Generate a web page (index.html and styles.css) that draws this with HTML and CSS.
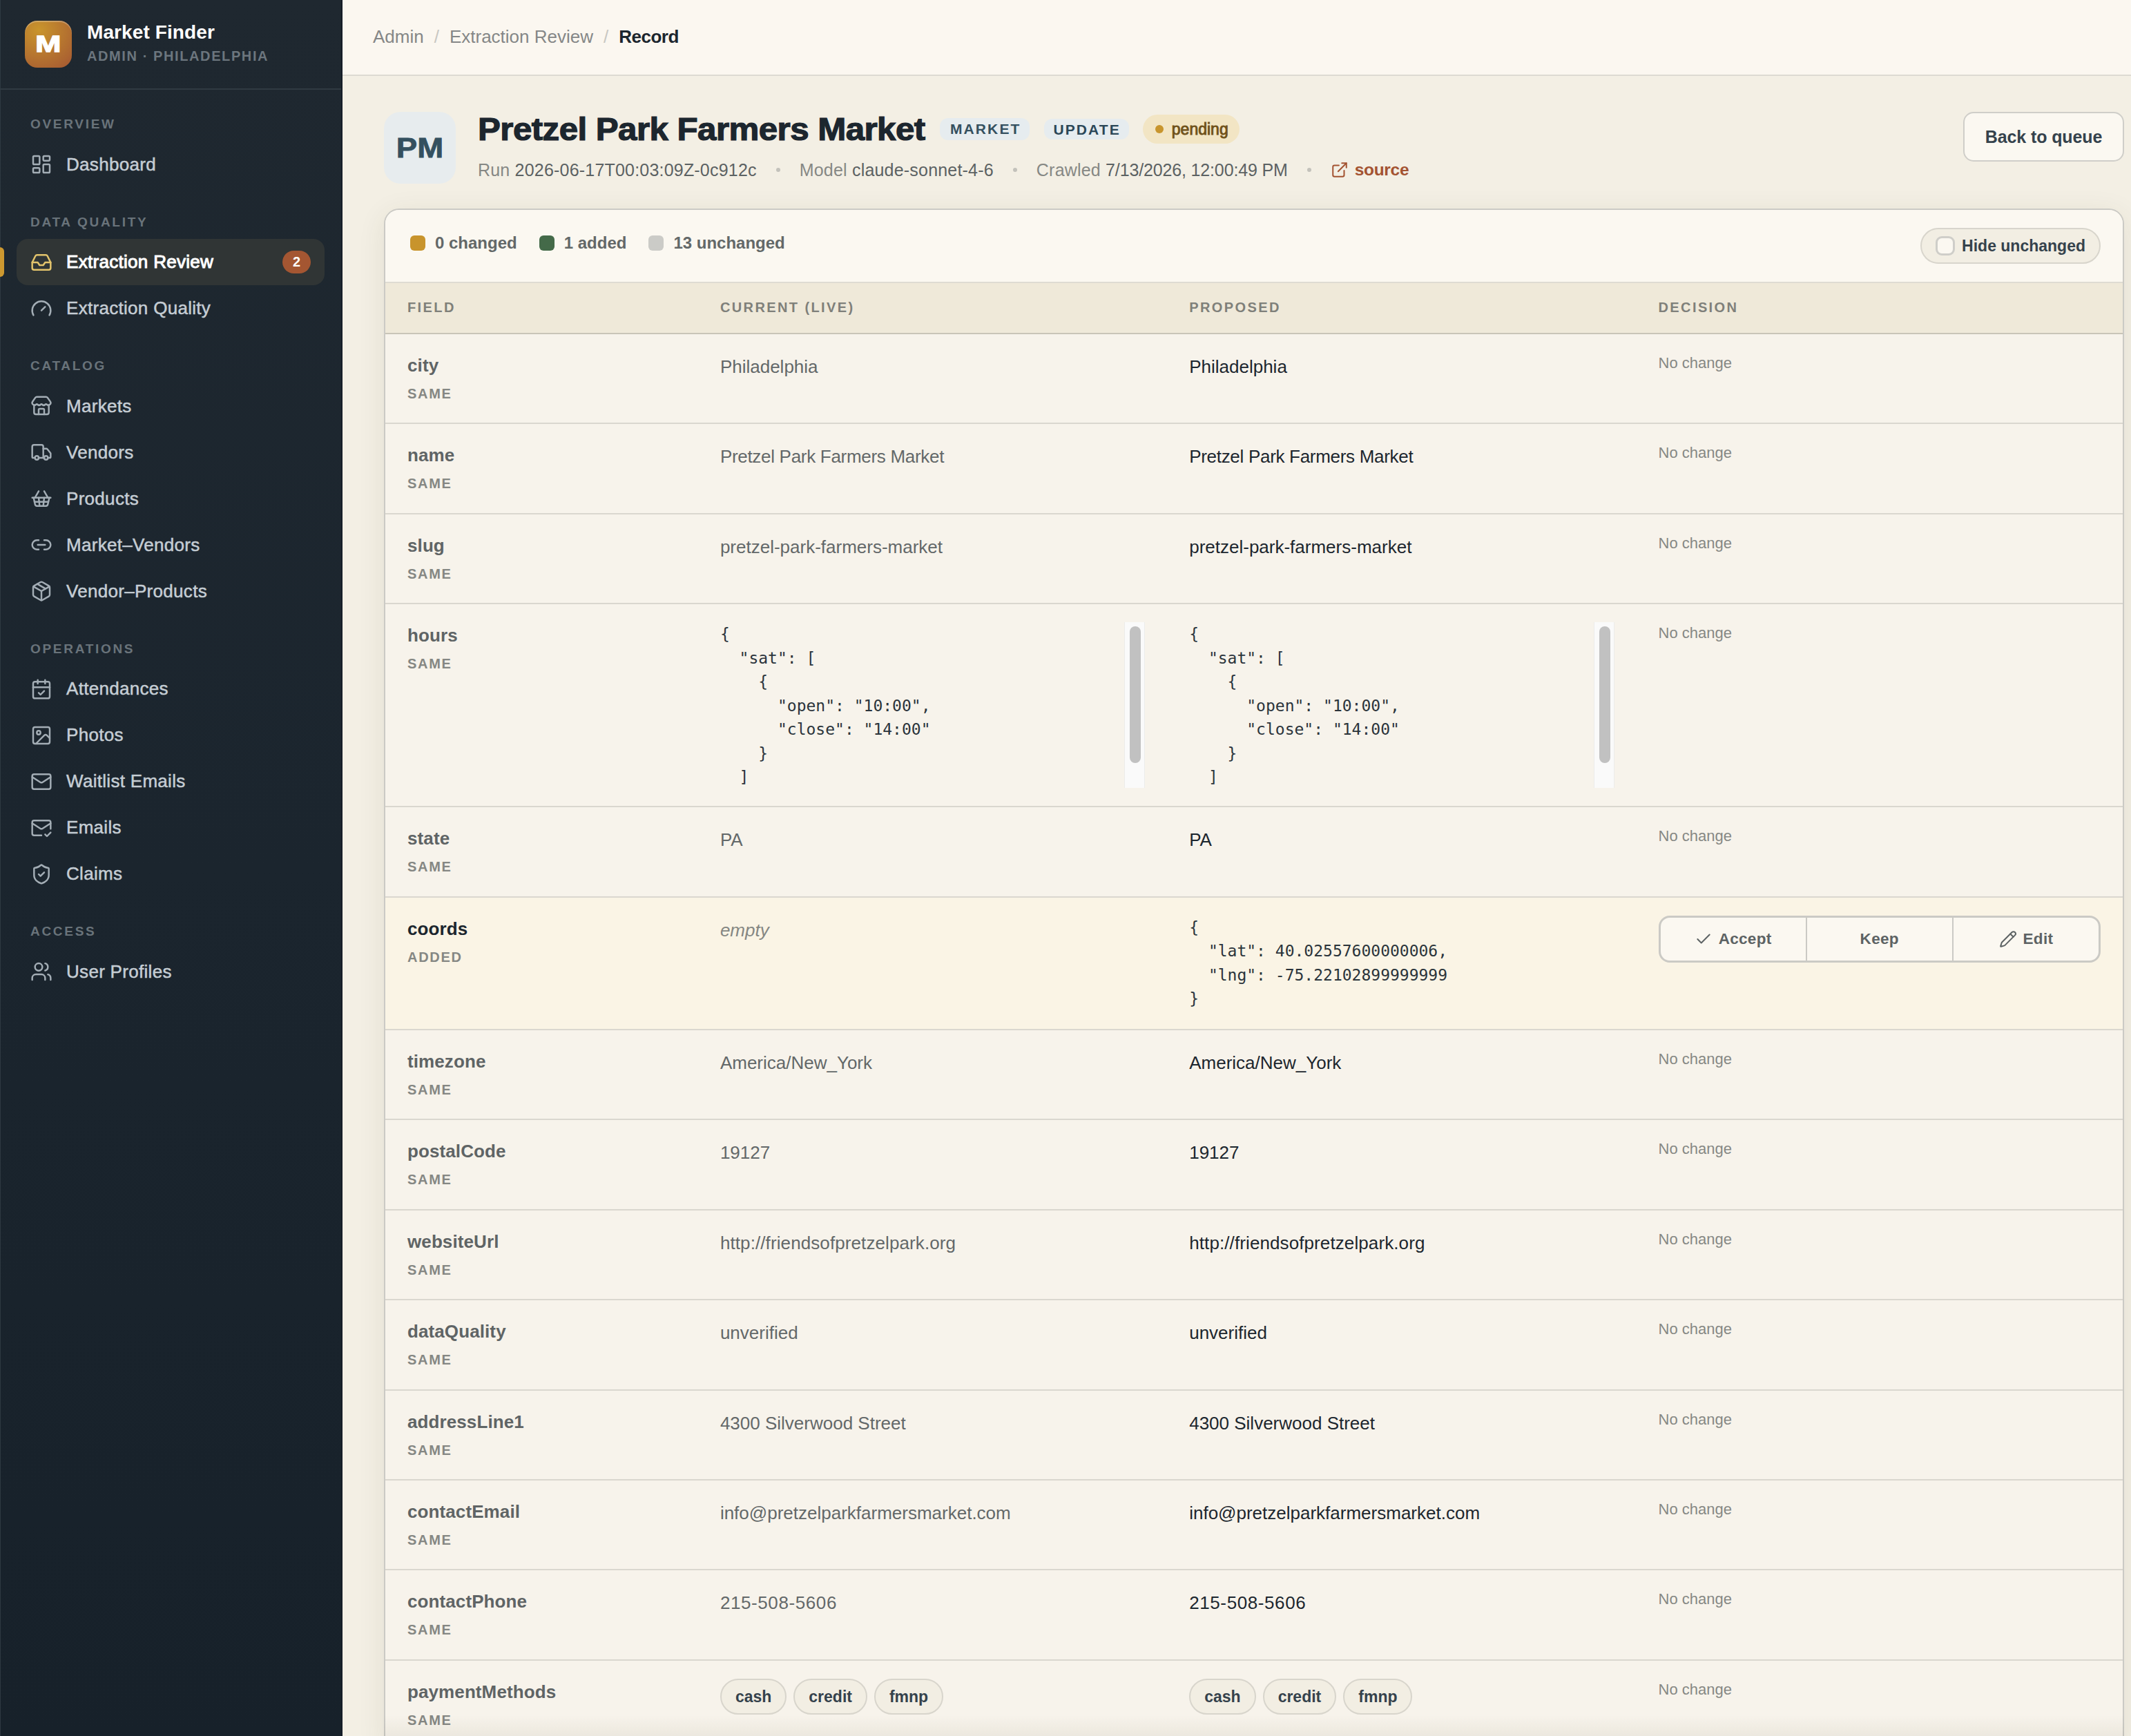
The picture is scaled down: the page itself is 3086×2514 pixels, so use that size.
FILE: index.html
```html
<!DOCTYPE html>
<html lang="en">
<head>
  <meta charset="UTF-8">
  <meta name="viewport" content="width=device-width, initial-scale=1.0">
  <title>Pretzel Park Farmers Market - Extraction Review</title>
  <link rel="stylesheet" href="styles.css">
</head>
<body>

<aside class="sidebar">
  <div class="brand">
    <div class="brand-logo"><span>M</span></div>
    <div class="brand-text">
      <div class="brand-name">Market Finder</div>
      <div class="brand-sub">Admin · Philadelphia</div>
    </div>
  </div>

  <nav class="nav">
    <div class="nav-label">Overview</div>
    <a class="nav-item">
      <svg class="icon" viewBox="0 0 24 24"><rect width="7" height="9" x="3" y="3" rx="1"/><rect width="7" height="5" x="14" y="3" rx="1"/><rect width="7" height="9" x="14" y="12" rx="1"/><rect width="7" height="5" x="3" y="16" rx="1"/></svg>
      <span>Dashboard</span>
    </a>

    <div class="nav-label">Data quality</div>
    <a class="nav-item active">
      <svg class="icon" viewBox="0 0 24 24"><path d="M22 12h-6l-2 3h-4l-2-3H2"/><path d="M5.45 5.11 2 12v6a2 2 0 0 0 2 2h16a2 2 0 0 0 2-2v-6l-3.45-6.89A2 2 0 0 0 16.76 4H7.24a2 2 0 0 0-1.79 1.11z"/></svg>
      <span>Extraction Review</span>
      <span class="nav-count">2</span>
    </a>
    <a class="nav-item">
      <svg class="icon" viewBox="0 0 24 24"><path d="m12 14 4-4"/><path d="M3.34 19a10 10 0 1 1 17.32 0"/></svg>
      <span>Extraction Quality</span>
    </a>

    <div class="nav-label">Catalog</div>
    <a class="nav-item">
      <svg class="icon" viewBox="0 0 24 24"><path d="M15 21v-5a1 1 0 0 0-1-1h-4a1 1 0 0 0-1 1v5"/><path d="M17.774 10.31a1.12 1.12 0 0 0-1.549 0 2.5 2.5 0 0 1-3.451 0 1.12 1.12 0 0 0-1.548 0 2.5 2.5 0 0 1-3.452 0 1.12 1.12 0 0 0-1.549 0 2.5 2.5 0 0 1-3.77-3.248l2.889-4.184A2 2 0 0 1 7 2h10a2 2 0 0 1 1.653.873l2.895 4.192a2.5 2.5 0 0 1-3.774 3.244"/><path d="M4 10.95V19a2 2 0 0 0 2 2h12a2 2 0 0 0 2-2v-8.05"/></svg>
      <span>Markets</span>
    </a>
    <a class="nav-item">
      <svg class="icon" viewBox="0 0 24 24"><path d="M14 18V6a2 2 0 0 0-2-2H4a2 2 0 0 0-2 2v11a1 1 0 0 0 1 1h2"/><path d="M15 18H9"/><path d="M19 18h2a1 1 0 0 0 1-1v-3.65a1 1 0 0 0-.22-.624l-3.48-4.35A1 1 0 0 0 17.52 8H14"/><circle cx="17" cy="18" r="2"/><circle cx="7" cy="18" r="2"/></svg>
      <span>Vendors</span>
    </a>
    <a class="nav-item">
      <svg class="icon" viewBox="0 0 24 24"><path d="m15 11-1 9"/><path d="m19 11-4-7"/><path d="M2 11h20"/><path d="m3.5 11 1.6 7.4a2 2 0 0 0 2 1.6h9.8a2 2 0 0 0 2-1.6l1.7-7.4"/><path d="M4.5 15.5h15"/><path d="m5 11 4-7"/><path d="m9 11 1 9"/></svg>
      <span>Products</span>
    </a>
    <a class="nav-item">
      <svg class="icon" viewBox="0 0 24 24"><path d="M9 17H7A5 5 0 0 1 7 7h2"/><path d="M15 7h2a5 5 0 1 1 0 10h-2"/><path d="M8 12h8"/></svg>
      <span>Market–Vendors</span>
    </a>
    <a class="nav-item">
      <svg class="icon" viewBox="0 0 24 24"><path d="M11 21.73a2 2 0 0 0 2 0l7-4A2 2 0 0 0 21 16V8a2 2 0 0 0-1-1.73l-7-4a2 2 0 0 0-2 0l-7 4A2 2 0 0 0 3 8v8a2 2 0 0 0 1 1.73z"/><path d="M12 22V12"/><path d="M3.29 7 12 12l8.71-5"/><path d="m7.5 4.27 9 5.15"/></svg>
      <span>Vendor–Products</span>
    </a>

    <div class="nav-label">Operations</div>
    <a class="nav-item">
      <svg class="icon" viewBox="0 0 24 24"><path d="M8 2v4"/><path d="M16 2v4"/><rect width="18" height="18" x="3" y="4" rx="2"/><path d="M3 10h18"/><path d="m9 16 2 2 4-4"/></svg>
      <span>Attendances</span>
    </a>
    <a class="nav-item">
      <svg class="icon" viewBox="0 0 24 24"><rect width="18" height="18" x="3" y="3" rx="2"/><circle cx="9" cy="9" r="2"/><path d="m21 15-3.086-3.086a2 2 0 0 0-2.828 0L6 21"/></svg>
      <span>Photos</span>
    </a>
    <a class="nav-item">
      <svg class="icon" viewBox="0 0 24 24"><rect width="20" height="16" x="2" y="4" rx="2"/><path d="m22 7-8.97 5.7a1.94 1.94 0 0 1-2.06 0L2 7"/></svg>
      <span>Waitlist Emails</span>
    </a>
    <a class="nav-item">
      <svg class="icon" viewBox="0 0 24 24"><path d="M22 13V6a2 2 0 0 0-2-2H4a2 2 0 0 0-2 2v12c0 1.1.9 2 2 2h8"/><path d="m22 7-8.97 5.7a1.94 1.94 0 0 1-2.06 0L2 7"/><path d="m16 19 2 2 4-4"/></svg>
      <span>Emails</span>
    </a>
    <a class="nav-item">
      <svg class="icon" viewBox="0 0 24 24"><path d="M20 13c0 5-3.5 7.5-7.66 8.95a1 1 0 0 1-.67-.01C7.5 20.5 4 18 4 13V6a1 1 0 0 1 1-1c2 0 4.5-1.2 6.24-2.72a1.17 1.17 0 0 1 1.52 0C14.51 3.81 17 5 19 5a1 1 0 0 1 1 1z"/><path d="m9 12 2 2 4-4"/></svg>
      <span>Claims</span>
    </a>

    <div class="nav-label">Access</div>
    <a class="nav-item">
      <svg class="icon" viewBox="0 0 24 24"><path d="M16 21v-2a4 4 0 0 0-4-4H6a4 4 0 0 0-4 4v2"/><circle cx="9" cy="7" r="4"/><path d="M22 21v-2a4 4 0 0 0-3-3.87"/><path d="M16 3.13a4 4 0 0 1 0 7.75"/></svg>
      <span>User Profiles</span>
    </a>
  </nav>
</aside>

<main class="main">
  <header class="topbar">
    <span>Admin</span>
    <span class="sep">/</span>
    <span>Extraction Review</span>
    <span class="sep">/</span>
    <span class="current">Record</span>
  </header>

  <div class="content">
    <section class="record-head">
      <div class="avatar"><span>PM</span></div>
      <div class="record-info">
        <div class="title-row">
          <h1>Pretzel Park Farmers Market</h1>
          <span class="tag">Market</span>
          <span class="tag tag-small">Update</span>
          <span class="status"><i class="status-dot"></i>pending</span>
        </div>
        <div class="meta">
          <span>Run <b>2026-06-17T00:03:09Z-0c912c</b></span>
          <i class="meta-dot"></i>
          <span>Model <b>claude-sonnet-4-6</b></span>
          <i class="meta-dot"></i>
          <span>Crawled <b class="date">7/13/2026, 12:00:49 PM</b></span>
          <i class="meta-dot"></i>
          <a class="source">
            <svg class="icon" viewBox="0 0 24 24"><path d="M15 3h6v6"/><path d="M10 14 21 3"/><path d="M18 13v6a2 2 0 0 1-2 2H5a2 2 0 0 1-2-2V8a2 2 0 0 1 2-2h6"/></svg>
            source
          </a>
        </div>
      </div>
      <button class="btn">Back to queue</button>
    </section>

    <section class="card">
      <div class="toolbar">
        <div class="legend">
          <span class="legend-item"><i class="swatch changed"></i>0 changed</span>
          <span class="legend-item"><i class="swatch added"></i>1 added</span>
          <span class="legend-item"><i class="swatch same"></i>13 unchanged</span>
        </div>
        <label class="toggle"><i class="checkbox"></i>Hide unchanged</label>
      </div>

      <div class="row thead">
        <div>Field</div>
        <div>Current (live)</div>
        <div>Proposed</div>
        <div>Decision</div>
      </div>

      <div class="row">
        <div class="field">city<small>Same</small></div>
        <div class="value old">Philadelphia</div>
        <div class="value">Philadelphia</div>
        <div class="decision">No change</div>
      </div>
      <div class="row">
        <div class="field">name<small>Same</small></div>
        <div class="value old tight">Pretzel Park Farmers Market</div>
        <div class="value tight">Pretzel Park Farmers Market</div>
        <div class="decision">No change</div>
      </div>
      <div class="row">
        <div class="field">slug<small>Same</small></div>
        <div class="value old">pretzel-park-farmers-market</div>
        <div class="value">pretzel-park-farmers-market</div>
        <div class="decision">No change</div>
      </div>
      <div class="row">
        <div class="field">hours<small>Same</small></div>
        <div class="code">
<pre>{
  "sat": [
    {
      "open": "10:00",
      "close": "14:00"
    }
  ]
</pre>
          <div class="scrollbar"><div class="thumb"></div></div>
        </div>
        <div class="code">
<pre>{
  "sat": [
    {
      "open": "10:00",
      "close": "14:00"
    }
  ]
</pre>
          <div class="scrollbar"><div class="thumb"></div></div>
        </div>
        <div class="decision">No change</div>
      </div>
      <div class="row">
        <div class="field">state<small>Same</small></div>
        <div class="value old">PA</div>
        <div class="value">PA</div>
        <div class="decision">No change</div>
      </div>
      <div class="row row-diff">
        <div class="field">coords<small>Added</small></div>
        <div class="value empty">empty</div>
        <div class="code">
<pre>{
  "lat": 40.02557600000006,
  "lng": -75.22102899999999
}</pre>
        </div>
        <div class="decision">
          <div class="segmented">
            <button><svg class="icon" viewBox="0 0 24 24"><path d="M20 6 9 17l-5-5"/></svg>Accept</button>
            <button>Keep</button>
            <button><svg class="icon" viewBox="0 0 24 24"><path d="M21.174 6.812a1 1 0 0 0-3.986-3.987L3.842 16.174a2 2 0 0 0-.5.83l-1.321 4.352a.5.5 0 0 0 .623.622l4.353-1.32a2 2 0 0 0 .83-.497z"/><path d="m15 5 4 4"/></svg>Edit</button>
          </div>
        </div>
      </div>
      <div class="row">
        <div class="field">timezone<small>Same</small></div>
        <div class="value old">America/New_York</div>
        <div class="value">America/New_York</div>
        <div class="decision">No change</div>
      </div>
      <div class="row">
        <div class="field">postalCode<small>Same</small></div>
        <div class="value old">19127</div>
        <div class="value">19127</div>
        <div class="decision">No change</div>
      </div>
      <div class="row">
        <div class="field">websiteUrl<small>Same</small></div>
        <div class="value old url">http://friendsofpretzelpark.org</div>
        <div class="value url">http://friendsofpretzelpark.org</div>
        <div class="decision">No change</div>
      </div>
      <div class="row">
        <div class="field">dataQuality<small>Same</small></div>
        <div class="value old">unverified</div>
        <div class="value">unverified</div>
        <div class="decision">No change</div>
      </div>
      <div class="row">
        <div class="field">addressLine1<small>Same</small></div>
        <div class="value old">4300 Silverwood Street</div>
        <div class="value">4300 Silverwood Street</div>
        <div class="decision">No change</div>
      </div>
      <div class="row">
        <div class="field">contactEmail<small>Same</small></div>
        <div class="value old">info@pretzelparkfarmersmarket.com</div>
        <div class="value">info@pretzelparkfarmersmarket.com</div>
        <div class="decision">No change</div>
      </div>
      <div class="row">
        <div class="field">contactPhone<small>Same</small></div>
        <div class="value old num">215-508-5606</div>
        <div class="value num">215-508-5606</div>
        <div class="decision">No change</div>
      </div>
      <div class="row">
        <div class="field">paymentMethods<small>Same</small></div>
        <div class="chips"><span>cash</span><span>credit</span><span>fmnp</span></div>
        <div class="chips"><span>cash</span><span>credit</span><span>fmnp</span></div>
        <div class="decision">No change</div>
      </div>
    </section>
  </div>
  <div class="bottom-shade"></div>
</main>

</body>
</html>
```
FILE: styles.css
```css
* {
  box-sizing: border-box;
}
body {
  margin: 0;
  height: 2514px;
  display: flex;
  overflow: hidden;
  font-family: "Liberation Sans", Arial, sans-serif;
  font-size: 26px;
  color: #1c262e;
  background: #f3efe4;
}
button {
  font-family: inherit;
  margin: 0;
}
.icon {
  width: 32px;
  height: 32px;
  flex: none;
  fill: none;
  stroke: currentColor;
  stroke-width: 1.85;
  stroke-linecap: round;
  stroke-linejoin: round;
}

/* Sidebar */
.sidebar {
  width: 496px;
  flex: none;
  background: linear-gradient(#1f2830, #1b252e 50%, #17212a);
  border-right: 2px solid #151d27;
  box-shadow: inset 1px 0 0 #2e3941;
}
.brand {
  height: 130px;
  padding: 30px 36px 0;
  display: flex;
  gap: 22px;
  border-bottom: 2px solid #303a42;
}
.brand-logo {
  width: 68px;
  height: 68px;
  border-radius: 18px;
  display: flex;
  align-items: center;
  justify-content: center;
  font-size: 33px;
  font-weight: bold;
  color: #fff;
  background: radial-gradient(circle at 30% 20%, #c9952c, #a65a32 95%);
  box-shadow: inset 0 2px 0 rgba(255, 255, 255, 0.25);
}
.brand-logo span {
  transform: scaleX(1.35);
  -webkit-text-stroke: 1.4px;
}
.brand-name {
  font-size: 28px;
  font-weight: bold;
  line-height: 34px;
  letter-spacing: 0.1px;
  color: #fff;
}
.brand-sub {
  margin-top: 3px;
  font-size: 20px;
  font-weight: bold;
  line-height: 28px;
  letter-spacing: 1.6px;
  text-transform: uppercase;
  color: #6c767e;
}
.nav {
  padding: 0 24px;
}
.nav-label {
  height: 74.5px;
  padding: 35px 20px 0;
  font-size: 19px;
  font-weight: bold;
  line-height: 30px;
  letter-spacing: 2.7px;
  text-transform: uppercase;
  color: #69737a;
}
.nav-item {
  position: relative;
  width: 446px;
  height: 67px;
  padding: 0 20px;
  display: flex;
  align-items: center;
  gap: 20px;
  border-radius: 16px;
  letter-spacing: 0.3px;
  color: #c5cdd4;
  -webkit-text-stroke: 0.5px;
}
.nav-item .icon {
  color: #a3adb5;
}
.nav-item.active {
  background: #303535;
  color: #fff;
  -webkit-text-stroke: 1px;
}
.nav-item.active .icon {
  color: #e3c46c;
}
.nav-item.active::before {
  content: "";
  position: absolute;
  left: -24px;
  top: 12px;
  width: 6px;
  height: 43px;
  border-radius: 0 6px 6px 0;
  background: #cc9830;
}
.nav-count {
  margin-left: auto;
  width: 41px;
  height: 33px;
  border-radius: 17px;
  background: #a45632;
  text-align: center;
  font-size: 20px;
  font-weight: bold;
  line-height: 33px;
  letter-spacing: 0;
  -webkit-text-stroke: 0;
}

/* Top bar */
.main {
  flex: 1;
  min-width: 0;
}
.topbar {
  height: 110px;
  padding: 0 44px 2px;
  display: flex;
  align-items: center;
  gap: 15px;
  background: #fbf7f0;
  border-bottom: 2px solid #dddad2;
  color: #858787;
}
.topbar .sep {
  color: #c8c7c2;
}
.topbar .current {
  font-weight: bold;
  letter-spacing: -0.5px;
  color: #1c262e;
}

/* Record header */
.content {
  padding: 52px 10px 0 60px;
}
.record-head {
  height: 104px;
  margin-bottom: 36px;
  display: flex;
  gap: 32px;
}
.avatar {
  width: 104px;
  height: 104px;
  border-radius: 24px;
  background: #e7ecee;
  display: flex;
  align-items: center;
  justify-content: center;
  font-size: 40px;
  font-weight: bold;
  color: #34505f;
}
.avatar span {
  transform: scaleX(1.14);
  -webkit-text-stroke: 0.8px;
}
.record-info {
  flex: 1;
}
.title-row {
  height: 50px;
  display: flex;
  align-items: center;
}
h1 {
  flex: none;
  width: 669px;
  margin: 0;
  font-size: 46px;
  line-height: 50px;
  letter-spacing: -0.5px;
  white-space: nowrap;
  transform: scaleX(1.07);
  transform-origin: 0 50%;
  -webkit-text-stroke: 1.2px;
}
.tag {
  height: 32px;
  margin-right: 21px;
  padding: 0 13px 0 15px;
  border-radius: 12px;
  background: #e6ecef;
  font-size: 21px;
  font-weight: bold;
  line-height: 31px;
  letter-spacing: 2.1px;
  text-transform: uppercase;
  color: #34505f;
}
.tag-small {
  height: 30px;
  margin-right: 20px;
  padding: 0 12px 0 13px;
  color: #2b4757;
}
.status {
  width: 140px;
  height: 42px;
  padding: 0 0 0 18px;
  display: flex;
  align-items: center;
  gap: 12px;
  border-radius: 21px;
  background: #f2e5c4;
  font-size: 23px;
  color: #6f511a;
  -webkit-text-stroke: 0.9px;
}
.status-dot {
  width: 12px;
  height: 12px;
  border-radius: 50%;
  background: #c8952d;
}
.meta {
  height: 36px;
  margin-top: 16px;
  display: flex;
  align-items: center;
  gap: 28px;
  font-size: 25px;
  letter-spacing: 0.2px;
  color: #868884;
}
.meta b {
  font-weight: normal;
  color: #5c6263;
}
.meta .date {
  letter-spacing: -0.15px;
}
.meta-dot {
  width: 6px;
  height: 6px;
  border-radius: 50%;
  background: #c3c2bb;
}
.source {
  display: flex;
  align-items: center;
  gap: 9px;
  font-size: 24.5px;
  font-weight: bold;
  letter-spacing: -0.3px;
  color: #a35331;
}
.source .icon {
  width: 26px;
  height: 26px;
}
.btn {
  width: 233px;
  height: 72px;
  padding: 0;
  border: 2px solid #cfcec9;
  border-radius: 15px;
  background: #fbf8f1;
  font-size: 25px;
  font-weight: bold;
  letter-spacing: -0.1px;
  color: #35424c;
}

/* Diff table */
.card {
  border: 2px solid #cbcac5;
  border-radius: 22px;
  overflow: hidden;
  background: #f7f3eb;
  box-shadow: 0 8px 40px rgba(70, 65, 30, 0.09);
}
.toolbar {
  height: 106px;
  padding: 26px 32px 0 36px;
  display: flex;
  align-items: flex-start;
  justify-content: space-between;
  background: #fbf8f1;
  border-bottom: 2px solid #dedbd2;
}
.legend {
  height: 44px;
  display: flex;
  align-items: center;
  gap: 32px;
}
.legend-item {
  display: flex;
  align-items: center;
  gap: 14px;
  font-size: 24px;
  font-weight: bold;
  color: #636868;
}
.swatch {
  width: 22px;
  height: 22px;
  border-radius: 6px;
}
.swatch.changed {
  background: #c8942c;
}
.swatch.added {
  background: #446a49;
}
.swatch.same {
  background: #cbcbc7;
}
.toggle {
  height: 52px;
  padding: 0 20px;
  display: flex;
  align-items: center;
  gap: 10px;
  border: 2px solid #d8d5cc;
  border-radius: 26px;
  background: #f2eee3;
  font-size: 23px;
  font-weight: bold;
  color: #35424c;
}
.checkbox {
  width: 28px;
  height: 28px;
  border: 3px solid #cfcec9;
  border-radius: 9px;
  background: #fbf8f1;
}
.row {
  min-height: 130.45px;
  display: grid;
  grid-template-columns: 18% 27% 27% 28%;
  border-bottom: 2px solid #dad7cf;
}
.row > div {
  padding: 26px 32px;
}
.row.thead {
  height: 74px;
  min-height: 0;
  background: #efe9d9;
  border-bottom-color: #c9c5b8;
}
.row.thead > div {
  padding: 0 32px;
  font-size: 20px;
  font-weight: bold;
  line-height: 70px;
  letter-spacing: 2.4px;
  text-transform: uppercase;
  color: #7f807a;
}
.row.row-diff {
  background: #faf4e5;
}
.field {
  font-weight: bold;
  line-height: 38px;
  letter-spacing: 0.1px;
  color: #5f6465;
}
.row-diff .field {
  color: #1c262e;
}
.field small {
  display: block;
  margin-top: 7px;
  font-size: 20px;
  line-height: 30px;
  letter-spacing: 1.7px;
  text-transform: uppercase;
  color: #858783;
}
.value {
  line-height: 42px;
}
.value.old {
  color: #636869;
}
.value.tight {
  letter-spacing: -0.3px;
}
.value.url {
  letter-spacing: 0.1px;
}
.value.num {
  letter-spacing: 0.6px;
}
.value.empty {
  font-style: italic;
  color: #858783;
}
.decision {
  font-size: 22px;
  line-height: 32px;
  color: #868884;
}
.code {
  display: flex;
}
pre {
  flex: 1;
  margin: 0;
  max-height: 240px;
  overflow: hidden;
  font-family: "DejaVu Sans Mono", monospace;
  font-size: 23px;
  line-height: 34.5px;
  color: #2b343b;
}
.scrollbar {
  width: 30px;
  height: 240px;
  padding: 6px 6px 0 7px;
  background: #fafafa;
  border: solid #ececea;
  border-width: 0 1px;
}
.thumb {
  width: 16px;
  height: 198px;
  border-radius: 8px;
  background: #c1c1c1;
}
.segmented {
  height: 68px;
  display: flex;
  border: 3px solid #cbcac5;
  border-radius: 16px;
  overflow: hidden;
  background: #fbf8f1;
}
.segmented button {
  flex: 1;
  padding: 0;
  display: flex;
  align-items: center;
  justify-content: center;
  gap: 9px;
  border: 0;
  border-right: 2px solid #cbcac5;
  background: none;
  font-size: 22.5px;
  font-weight: bold;
  letter-spacing: 0.3px;
  color: #5d6364;
}
.segmented button:last-child {
  border-right: 0;
}
.segmented .icon {
  width: 26px;
  height: 26px;
}
.chips {
  display: flex;
  align-items: flex-start;
  gap: 10px;
}
.chips span {
  height: 52px;
  padding: 0 20px;
  border: 2px solid #d8d5cc;
  border-radius: 26px;
  background: #f2eee3;
  font-size: 23px;
  font-weight: bold;
  line-height: 48px;
  color: #35424c;
}

.bottom-shade {
  position: fixed;
  left: 556px;
  right: 10px;
  bottom: 0;
  height: 30px;
  background: linear-gradient(rgba(70, 65, 30, 0), rgba(70, 65, 30, 0.06));
}
```
